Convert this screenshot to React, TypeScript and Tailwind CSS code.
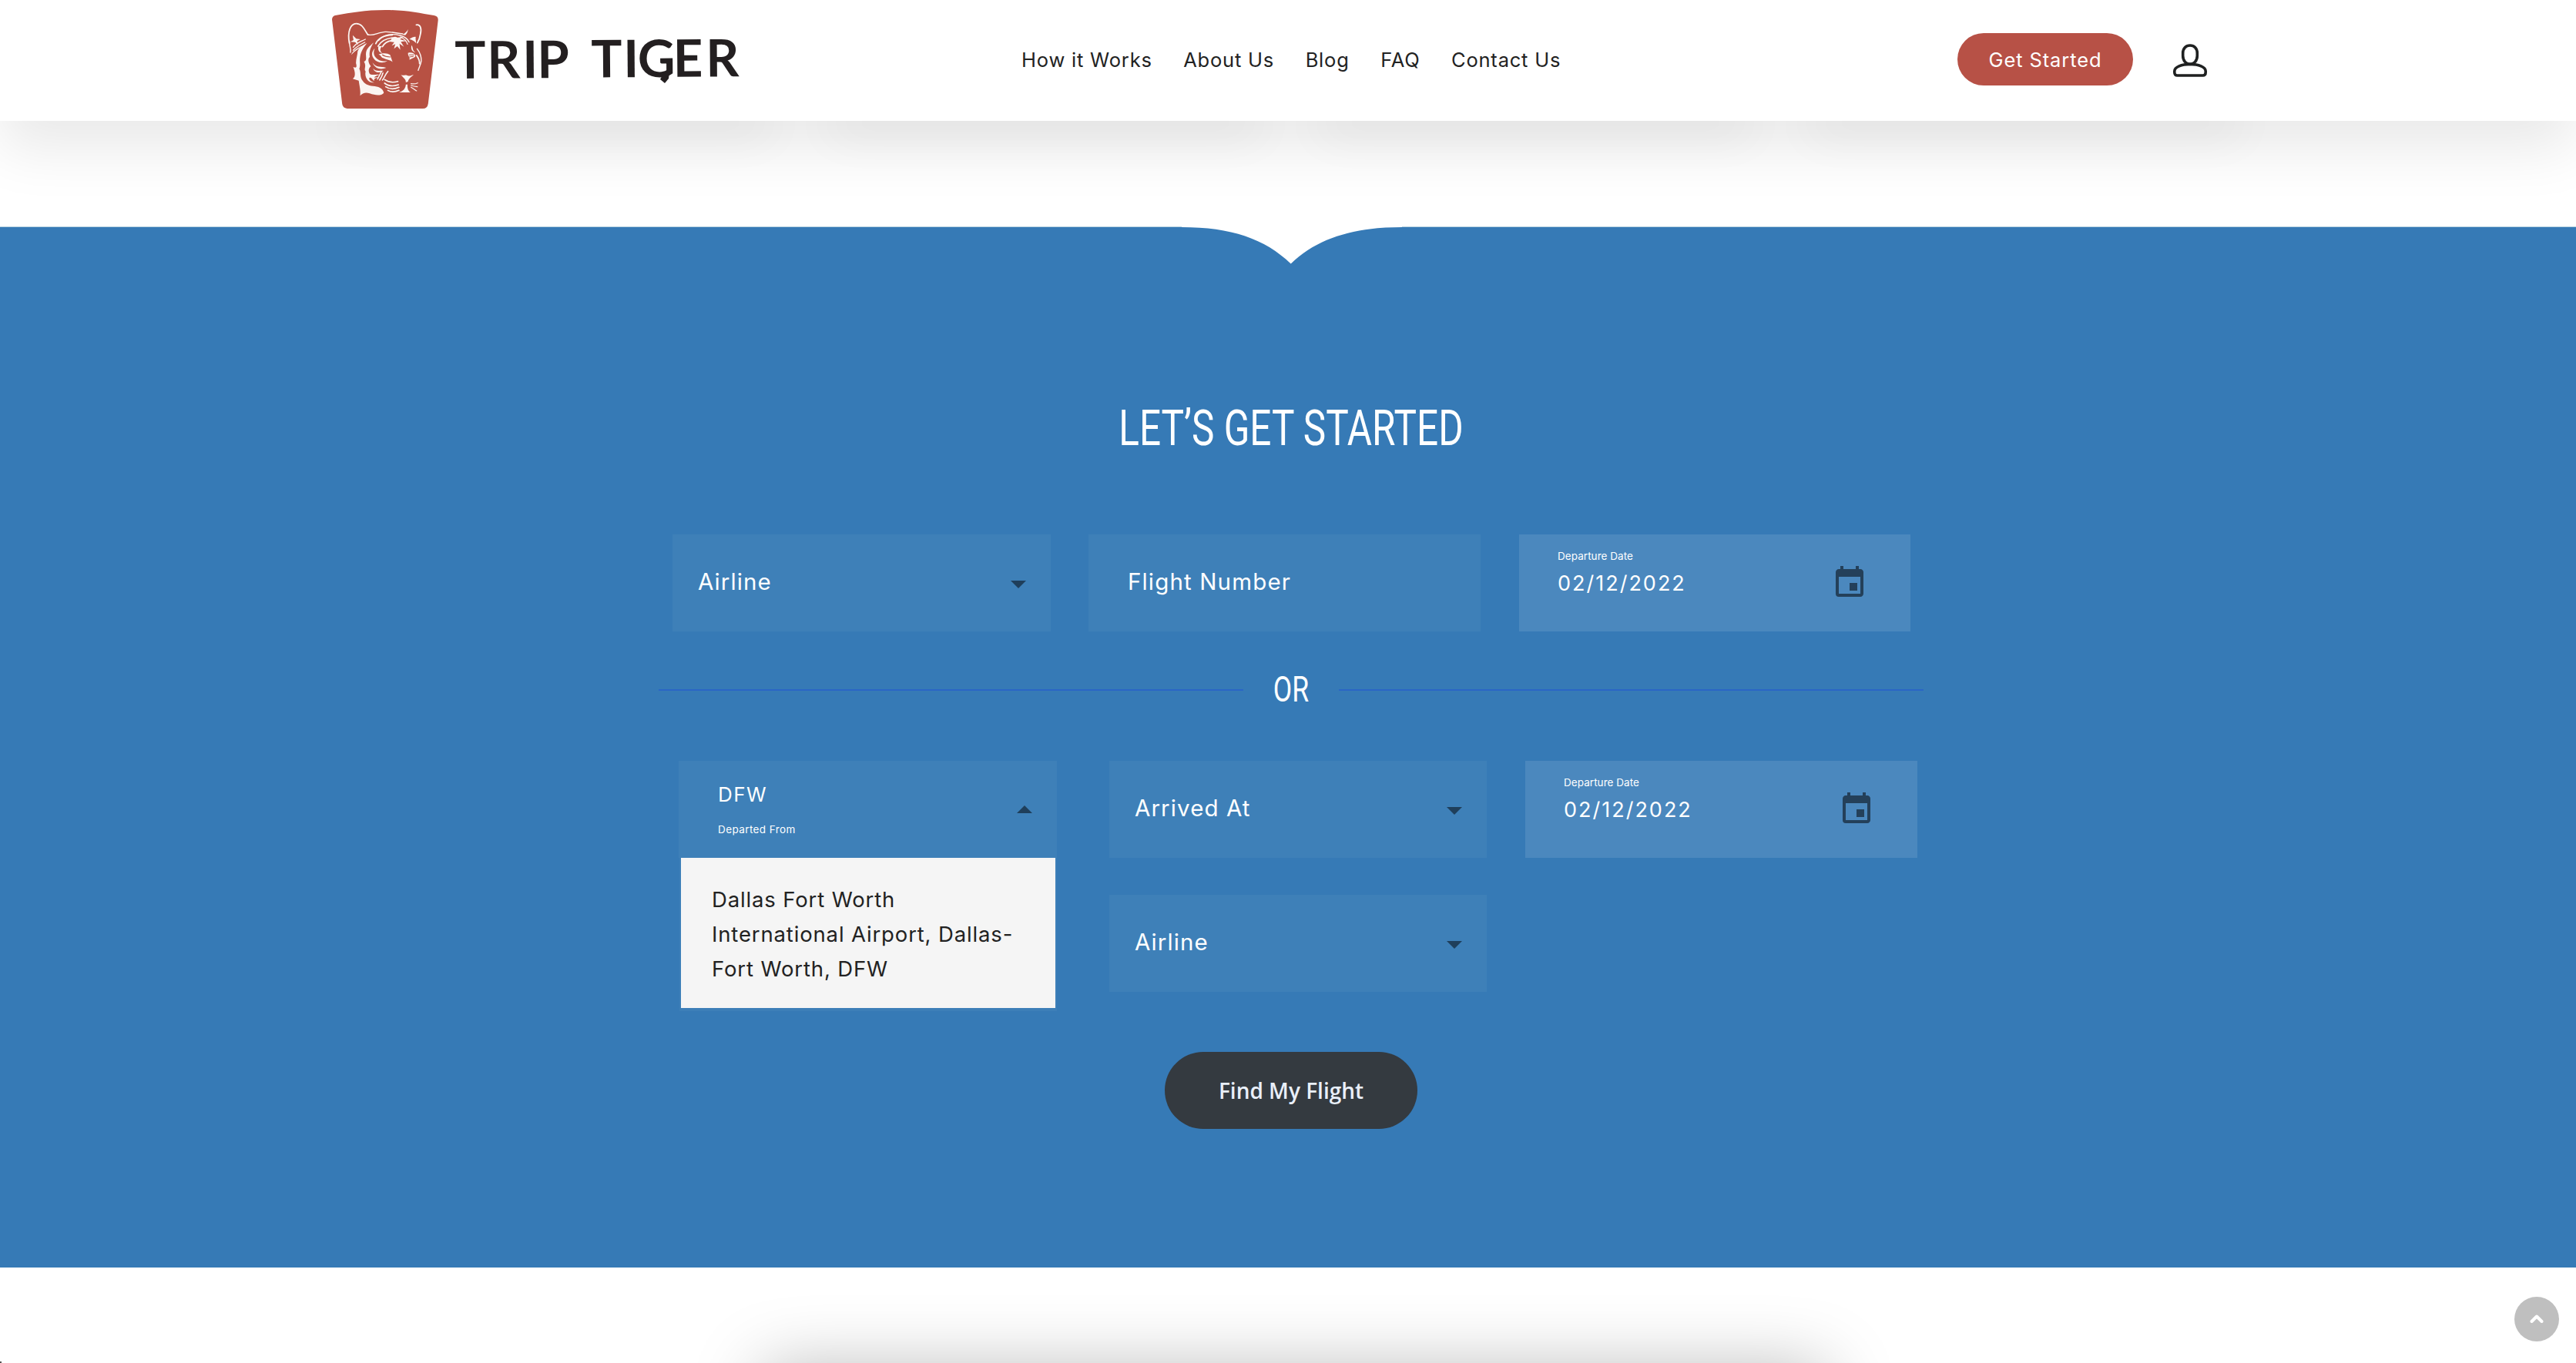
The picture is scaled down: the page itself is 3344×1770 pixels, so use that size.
import React from "react";
import { MdEvent } from "react-icons/md";

const navItems = ["How it Works", "About Us", "Blog", "FAQ", "Contact Us"];

function TigerBadge() {
  return (
    <svg className="h-[128px] w-[138px] shrink-0" viewBox="31 39 386 384" preserveAspectRatio="none">
      <path
        fill="#b75143"
        d="M31 76 Q31 61 47 59 C100 50 150 39 225 39 C300 39 350 52 401 60 Q418 63 416 80 L380 404 Q377 423 361 423 L86 423 Q70 421 68 405 Z"
      />
      <g fill="none" stroke="#fbf5f2" strokeLinecap="round" strokeLinejoin="round">
        <path strokeWidth="5" d="M94 168 C86 124 98 92 119 92 C142 92 150 118 161 135" />
        <path strokeWidth="4" d="M94 160 C94 180 100 188 98 204" />
        <path strokeWidth="4" d="M161 135 C180 142 200 125 224 124 C250 123 268 131 288 132" />
        <path strokeWidth="5" d="M337 97 C352 94 357 112 352 133 C350 148 346 158 341 167" />
        <path strokeWidth="4" d="M152 153 C134 163 122 164 108 184 M150 165 C134 174 120 180 108 196" />
        <path strokeWidth="5" d="M190 170 C200 145 225 137 250 136 M198 180 C208 160 228 150 250 147 M214 182 C222 166 236 160 248 158" />
        <path strokeWidth="4" d="M200 158 C220 133 250 130 278 138 C296 143 306 152 311 164" />
        <path strokeWidth="4" d="M280 144 C296 152 302 162 305 172" />
        <path strokeWidth="4" d="M340 190 C350 204 356 222 355 238 C353 252 347 262 344 274" />
        <path strokeWidth="5" d="M338 216 C346 228 350 236 349 248" />
        <path strokeWidth="5" d="M222 310 C238 322 255 322 270 317 M222 324 C238 338 256 336 272 330 M226 338 C242 350 258 348 274 340 M234 352 C248 361 262 358 274 352" />
        <path strokeWidth="3.5" d="M318 326 C328 328 336 326 342 323 M318 333 C328 336 334 337 341 338 M318 340 C328 346 332 350 338 354" />
        <path strokeWidth="4.5" d="M196 308 C202 298 206 288 210 280 M204 312 C210 302 214 294 216 284 M214 312 C222 302 224 290 234 278" />
      </g>
      <g fill="#fbf5f2">
        <path d="M106 137 L119 151 L134 153 L122 160 L126 175 L115 164 L98 163 L109 156 Z" />
        <path d="M286 135 C296 130 303 124 307 114 C306 126 302 132 297 137 Z" />
        <path d="M312 152 C322 146 330 142 335 144 C333 152 337 160 336 168 C330 160 324 156 312 152 Z" />
        <path d="M124 200 C130 184 142 176 158 168 C146 184 136 200 133 222 C130 240 136 252 130 268 C138 284 130 300 143 316 C152 330 168 336 186 336 C206 338 218 350 219 362 C210 374 188 372 168 364 C154 359 142 362 133 373 C136 354 130 330 128 314 L106 307 C117 300 116 282 108 261 C120 266 122 262 118 246 C118 228 124 212 124 200 Z" />
        <path d="M101 214 C106 198 122 188 142 178 C126 192 112 200 101 214 Z" />
        <path d="M182 166 C168 190 166 204 168 222 C158 232 166 250 172 258 C164 266 162 276 168 288 C176 296 196 286 208 292 C194 292 188 298 184 302 L200 300 C190 306 182 304 184 316 C176 306 172 298 166 304 C166 314 174 318 184 322 C162 324 148 300 153 278 C145 270 158 258 147 240 C162 236 150 216 156 198 C162 184 168 180 182 166 Z" />
        <path d="M186 188 C180 206 182 218 196 230 C208 240 224 238 232 238 C216 248 194 244 184 230 C172 214 176 200 186 188 Z" />
        <path d="M200 180 L213 179 C204 188 204 200 214 206 C202 206 196 194 200 180 Z" />
        <path d="M200 212 C216 206 232 206 242 214 L251 242 C242 232 230 234 216 226 C208 222 210 216 200 212 Z" />
        <path d="M178 244 C192 266 206 258 228 264 C214 270 190 274 178 244 Z M180 266 C190 280 204 274 218 276 C206 284 186 286 180 266 Z" />
        <path d="M246 152 C252 142 262 142 268 146 L290 144 L278 153 L300 160 L281 163 L292 182 L276 170 L279 194 L268 180 L256 190 L261 172 L248 178 L257 164 L243 163 Z" />
        <path d="M307 206 C320 202 330 208 334 216 C334 226 320 226 312 234 C316 224 306 218 307 206 Z" />
        <path d="M320 176 C326 184 322 196 334 204 C322 202 316 190 320 176 Z" />
        <path d="M281 291 C290 297 294 290 304 294 C314 298 318 294 327 291 C322 298 308 306 307 318 L299 321 C300 308 290 304 281 291 Z" />
        <path d="M299 329 L305 329 C304 345 308 354 316 360 L274 360 C290 354 298 345 299 329 Z" />
      </g>
      <g fill="none" stroke="#b75143" strokeLinecap="round">
        <path strokeWidth="3.5" d="M214 214 C222 220 232 222 242 222" />
        <path strokeWidth="3" d="M312 214 L328 214 M312 222 L326 220" />
      </g>
    </svg>
  );
}

function Wordmark() {
  return (
    <svg className="ml-[17px] h-[100px] w-[380px] shrink-0" viewBox="586 28 380 100">
      <g transform="rotate(-0.45 590 101)">
        <text
          x="590.5 632.5 678.5 697.5 767.5 809.5 828 874 916.5"
          y="103"
          fill="#231f20"
          className="font-['Lato'] text-[67px] font-bold"
        >
          TRIPTIGER
        </text>
      </g>
      <path d="M861 97 L869 94 L868 103 L863 109 L857 104 Z" fill="#231f20" />
    </svg>
  );
}

function UserIcon() {
  return (
    <svg className="mt-[3px] ml-[52px] h-[43px] w-[44px]" viewBox="0 0 44 43" fill="none" stroke="#1f2121" strokeWidth="3.6">
      <path d="M22 2 C27.5 2 31.3 6 31.3 12 L31.3 15.5 C31.3 22 27 26.4 22 26.4 C17 26.4 12.7 22 12.7 15.5 L12.7 12 C12.7 6 16.500 2 22 2 Z" />
      <path d="M22 26.400 C33 26.400 42.200 30 42.200 35.500 L42.200 37 C42.200 39.500 41 41 38.500 41 L5.500 41 C3 41 1.800 39.500 1.800 37 L1.800 35.500 C1.800 30 11 26.400 22 26.400 Z" />
    </svg>
  );
}

function Caret({ up = false }: { up?: boolean }) {
  return (
    <svg className="h-[10px] w-[20px]" viewBox="0 0 20 10" fill="#1f3f5b">
      <path d={up ? "M0 10 L10 0 L20 10 Z" : "M0 0 L10 10 L20 0 Z"} />
    </svg>
  );
}

function SelectField({ label, className }: { label: string; className: string }) {
  return (
    <div className={`flex h-[126px] items-center justify-between bg-[#3e80b8] pr-8 pb-1 pl-[33px] text-white ${className}`}>
      <span className="text-[29.5px] tracking-[1.1px]">{label}</span>
      <div className="mt-[8px]">
        <Caret />
      </div>
    </div>
  );
}

function DateField({ className }: { className: string }) {
  return (
    <div className={`flex h-[126px] justify-between bg-[#4b88be] pr-[55px] pl-[50px] text-white ${className}`}>
      <div className="flex flex-col pt-[18px]">
        <span className="text-[13.5px] leading-[20px] tracking-[0.05px]">Departure Date</span>
        <span className="mt-[6px] text-[27px] leading-[40px] tracking-[2px]">02/12/2022</span>
      </div>
      <MdEvent className="mt-[39px] size-[48px] text-[#24405a]" />
    </div>
  );
}

function Header() {
  return (
    <header className="relative z-10 flex h-[157px] items-center bg-white pb-[3px] pl-[431px] shadow-[0_36px_76px_rgba(0,0,0,0.09)]">
      <TigerBadge />
      <Wordmark />
      <nav className="ml-[360px] flex w-[1215px] gap-[40.5px] pt-[2px] text-[25.5px] tracking-[0.8px] whitespace-nowrap text-[#222]">
        {navItems.map((item) => (
          <a key={item}>{item}</a>
        ))}
      </nav>
      <button className="h-[68px] w-[228px] shrink-0 rounded-full bg-[#b75146] pt-[3px] text-[25.5px] tracking-[0.9px] text-white">
        Get Started
      </button>
      <UserIcon />
    </header>
  );
}

export default function App() {
  return (
    <div className="relative h-[1770px] w-[3344px] overflow-hidden bg-white font-['Inter',sans-serif]">
      <Header />
      <div className="-mt-[40px] flex h-[177px] gap-[74px] pl-[440px]">
        {[0, 1, 2, 3].map((card) => (
          <div key={card} className="h-[36px] w-[562px] shadow-[0_24px_60px_rgba(0,0,0,0.055)]" />
        ))}
      </div>

      <section className="relative h-[1352px] border-t border-[#b9d3e2] bg-[#367ab6]">
        <svg className="absolute top-[-1px] left-[1534px] h-[50px] w-[288px]" viewBox="1534 294 288 50">
          <path fill="#fff" d="M1534 294 L1534 295 C1598 295 1642 310 1675.700 342.500 C1711 308 1760 295 1820 295 L1820 294 Z" />
        </svg>

        <h2 className="ml-[676px] w-[2000px] scale-x-[0.767] pt-[221px] text-center font-['Roboto'] text-[64.5px] leading-[80px] font-normal text-white">
          LET’S GET STARTED
        </h2>

        <div className="ml-[855px] w-[1642px] pt-[98px]">
          <div className="flex pl-[18px]">
            <SelectField label="Airline" className="w-[491px]" />
            <div className="ml-[49px] flex h-[126px] w-[509px] items-center bg-[#3e80b8] pb-1 pl-[51px] text-[29.5px] tracking-[1.15px] text-white">
              Flight Number
            </div>
            <DateField className="ml-[50px] w-[508px]" />
          </div>

          <div className="mt-[46px] flex h-[60px] items-center">
            <div className="h-[2px] w-[759px] bg-[#2a66c5]" />
            <div className="w-[124px] scale-x-78 text-center font-['Roboto'] text-[45.5px] leading-[60px] font-normal text-white">OR</div>
            <div className="h-[2px] w-[759px] bg-[#2a66c5]" />
          </div>

          <div className="mt-[62px] flex pl-[26px]">
            <div className="relative h-[126px] w-[491px] bg-[#3e80b8] text-white">
              <div className="flex flex-col pt-[24px] pl-[51px]">
                <span className="text-[26px] leading-[40px] tracking-[1.5px]">DFW</span>
                <span className="mt-[15px] text-[13.5px] leading-[20px] tracking-[0.4px]">Departed From</span>
              </div>
              <div className="absolute top-[58px] right-[32px] flex">
                <Caret up />
              </div>
              <div className="absolute top-[126px] left-px w-[490px] bg-[#3d7fb8] px-[2px] pb-[4px]">
                <div className="h-[195px] bg-[#f5f5f5] pt-[32px] pl-[40px] text-[27.5px] leading-[45px] tracking-[0.85px] whitespace-nowrap text-[#222]">
                  Dallas Fort Worth
                  <br />
                  International Airport, Dallas-
                  <br />
                  Fort Worth, DFW
                </div>
              </div>
            </div>
            <div className="ml-[68px] flex flex-col gap-[48px]">
              <SelectField label="Arrived At" className="w-[490px]" />
              <SelectField label="Airline" className="w-[490px]" />
            </div>
            <DateField className="ml-[50px] w-[509px]" />
          </div>

          <button className="mt-[78px] ml-[657px] h-[100px] w-[328px] rounded-full bg-[#343a40] font-['Open_Sans'] text-[28px] font-semibold text-[#e9eff9]">
            Find My Flight
          </button>
        </div>
      </section>

      <div className="mt-[134px] ml-[990px] h-[200px] w-[1380px] bg-white shadow-[0_-4px_90px_rgba(0,0,0,0.27)]" />

      <button className="absolute top-[1684px] left-[3264px] flex size-[58px] items-center justify-center rounded-full bg-[#bfbfbf]">
        <svg className="h-[12px] w-[18px]" viewBox="0 0 18 12" fill="none" stroke="#fff" strokeWidth="4" strokeLinecap="round" strokeLinejoin="round">
          <path d="M2.500 9 L9 2.500 L15.500 9" />
        </svg>
      </button>
      <div className="absolute bottom-0 left-0 size-[2px] bg-[#555]" />
    </div>
  );
}
